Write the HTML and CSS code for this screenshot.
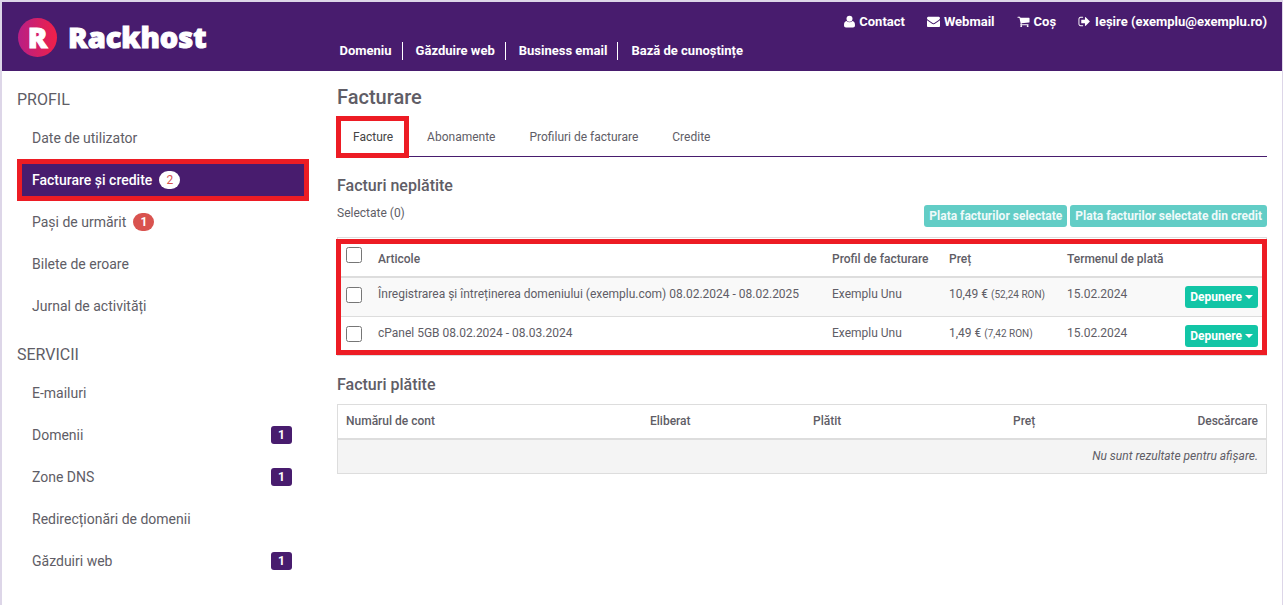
FILE: index.html
```html
<!DOCTYPE html>
<html lang="ro">
<head>
<meta charset="utf-8">
<meta name="viewport" content="width=device-width, initial-scale=1">
<title>Facturare - Rackhost</title>
<link rel="stylesheet" href="styles.css">
</head>
<body>
<header class="header">
  <a class="logo" href="#" aria-label="Rackhost">
    <span class="logo-mark">R</span>
    <span class="logo-name">Rackhost</span>
  </a>
  <div class="header-navs">
    <nav class="user-nav" aria-label="Cont">
      <a href="#"><svg class="icon icon-user" viewBox="0 0 11 13" aria-hidden="true"><circle cx="5.5" cy="3.7" r="3"/><path d="M2.6 6.1C.8 6.2 0 8 0 10.3 0 11.800 .8 12.500 2 12.500h7c1.200 0 2-.7 2-2.200 0-2.300-.8-4.100-2.600-4.200-.8.800-1.800 1.200-2.900 1.200s-2.100-.4-2.900-1.200z"/></svg>Contact</a>
      <a href="#"><svg class="icon" viewBox="0 0 1792 1792" aria-hidden="true"><path d="M1792 710v794q0 66-47 113t-113 47h-1472q-66 0-113-47t-47-113v-794q44 49 101 87 362 246 497 345 57 42 92.500 65.500t94.500 48 110 24.500h2q51 0 110-24.500t94.500-48 92.500-65.500q170-123 498-345 57-39 100-87zm0-294q0 79-49 151t-122 123q-376 261-468 325-10 7-42.500 31t-54 38.500-52 32.500-57.500 27-50 9h-2q-23 0-50-9t-57.500-27-52-32.500-54-38.500-42.500-31q-91-64-262-182.500t-205-142.500q-62-42-117-115.500t-55-136.500q0-78 41.500-130t118.500-52h1472q65 0 112.500 47t47.500 113z"/></svg>Webmail</a>
      <a href="#"><svg class="icon" viewBox="0 0 1792 1792" aria-hidden="true"><path d="M704 1536q0 52-38 90t-90 38-90-38-38-90 38-90 90-38 90 38 38 90zm896 0q0 52-38 90t-90 38-90-38-38-90 38-90 90-38 90 38 38 90zm128-1088v512q0 24-16.500 42.500t-40.500 21.500l-1044 122q13 60 13 70 0 16-24 64h920q26 0 45 19t19 45-19 45-45 19h-1024q-26 0-45-19t-19-45q0-11 8-31.500t16-36 21.500-40 15.500-29.500l-177-823h-204q-26 0-45-19t-19-45 19-45 45-19h256q16 0 28.500 6.500t19.500 15.500 13 24.500 8 26 5.500 29.500 4.500 26h1201q26 0 45 19t19 45z"/></svg>Coș</a>
      <a href="#"><svg class="icon" viewBox="0 0 1792 1792" aria-hidden="true"><path d="M704 1440q0 4 1 20t.5 26.500-3 23.500-10 19.500-20.500 6.500h-320q-119 0-203.500-84.500t-84.500-203.500v-704q0-119 84.500-203.500t203.500-84.500h320q13 0 22.500 9.500t9.500 22.500q0 4 1 20t.5 26.500-3 23.500-10 19.500-20.500 6.500h-320q-66 0-113 47t-47 113v704q0 66 47 113t113 47h312l11.500 1 11.500 3 8 5.500 7 9 2 13.500zm928-544q0 26-19 45l-544 544q-19 19-45 19t-45-19-19-45v-288h-448q-26 0-45-19t-19-45v-384q0-26 19-45t45-19h448v-288q0-26 19-45t45-19 45 19l544 544q19 19 19 45z"/></svg>Ieșire (exemplu@exemplu.ro)</a>
    </nav>
    <nav class="main-nav" aria-label="Principal">
      <a href="#">Domeniu</a>
      <a href="#">Găzduire web</a>
      <a href="#">Business email</a>
      <a href="#">Bază de cunoștințe</a>
    </nav>
  </div>
</header>

<div class="page">
  <aside class="sidebar">
    <h2 class="side-title">PROFIL</h2>
    <ul class="side-list">
      <li><a class="side-link" href="#">Date de utilizator</a></li>
      <li><a class="side-link active" href="#">Facturare și credite <span class="pill pill-light">2</span></a></li>
      <li><a class="side-link" href="#">Pași de urmărit <span class="pill">1</span></a></li>
      <li><a class="side-link" href="#">Bilete de eroare</a></li>
      <li><a class="side-link" href="#">Jurnal de activități</a></li>
    </ul>
    <h2 class="side-title">SERVICII</h2>
    <ul class="side-list">
      <li><a class="side-link" href="#">E-mailuri</a></li>
      <li><a class="side-link" href="#">Domenii <span class="count">1</span></a></li>
      <li><a class="side-link" href="#">Zone DNS <span class="count">1</span></a></li>
      <li><a class="side-link" href="#">Redirecționări de domenii</a></li>
      <li><a class="side-link" href="#">Găzduiri web <span class="count">1</span></a></li>
    </ul>
  </aside>

  <main class="content">
    <h1 class="title">Facturare</h1>
    <nav class="tabs" aria-label="Facturare">
      <a class="tab current" href="#" aria-current="page">Facture</a>
      <a class="tab" href="#">Abonamente</a>
      <a class="tab" href="#">Profiluri de facturare</a>
      <a class="tab" href="#">Credite</a>
    </nav>

    <h2 class="section-title">Facturi neplătite</h2>
    <div class="actions">
      <span>Selectate (0)</span>
      <div class="action-buttons">
        <button class="btn" type="button" disabled>Plata facturilor selectate</button>
        <button class="btn" type="button" disabled>Plata facturilor selectate din credit</button>
      </div>
    </div>
    <div class="marked">
      <table class="table striped">
        <colgroup><col class="c-check"><col><col class="c-profile"><col class="c-price"><col class="c-due"><col class="c-action"></colgroup>
        <thead>
          <tr>
            <th class="top"><input class="check" type="checkbox" aria-label="Selectează toate"></th>
            <th>Articole</th>
            <th>Profil de facturare</th>
            <th>Preț</th>
            <th colspan="2">Termenul de plată</th>
          </tr>
        </thead>
        <tbody>
          <tr>
            <td><input class="check" type="checkbox" aria-label="Selectează exemplu.com"></td>
            <td>Înregistrarea și întreținerea domeniului (exemplu.com) 08.02.2024 - 08.02.2025</td>
            <td>Exemplu Unu</td>
            <td>10,49 € <small>(52,24 RON)</small></td>
            <td>15.02.2024</td>
            <td class="c-pay"><button class="btn" type="button">Depunere<span class="caret"></span></button></td>
          </tr>
          <tr>
            <td><input class="check" type="checkbox" aria-label="Selectează cPanel 5GB"></td>
            <td>cPanel 5GB 08.02.2024 - 08.03.2024</td>
            <td>Exemplu Unu</td>
            <td>1,49 € <small>(7,42 RON)</small></td>
            <td>15.02.2024</td>
            <td class="c-pay"><button class="btn" type="button">Depunere<span class="caret"></span></button></td>
          </tr>
        </tbody>
      </table>
    </div>

    <h2 class="section-title">Facturi plătite</h2>
    <table class="table paid">
      <colgroup><col class="p-number"><col class="p-issued"><col class="p-paid"><col><col></colgroup>
      <thead>
        <tr><th>Numărul de cont</th><th>Eliberat</th><th>Plătit</th><th>Preț</th><th class="right">Descărcare</th></tr>
      </thead>
      <tbody>
        <tr><td class="empty" colspan="5">Nu sunt rezultate pentru afișare.</td></tr>
      </tbody>
    </table>
  </main>
</div>
</body>
</html>
```

FILE: styles.css
```css
:root {
  --purple: #481c6e;
  --text: #605d66;
  --red: #ed1c24;
  --teal: #12c5a6;
  --line: #ddd;
}

* { box-sizing: border-box; }

body {
  margin: 0;
  min-height: 100vh;
  border: 2px solid #ddd6e8;
  border-right-width: 1px;
  border-bottom: 0;
  background: #fff;
  color: var(--text);
  font: 12px/17px Roboto, "Liberation Sans", sans-serif;
}

a { color: inherit; text-decoration: none; }
h1, h2 { margin: 0; font-weight: 500; }

/* Header */
.header {
  display: flex;
  padding: 0 15px;
  min-height: 69px;
  background: var(--purple);
  color: #fff;
  font-size: 13px;
  font-weight: 700;
}

.logo {
  display: flex;
  align-items: center;
  gap: 11px;
  flex: 0 0 calc(25% + 10px);
  padding: 2px 0 0 1px;
  font-family: "Noto Sans", "Open Sans", sans-serif;
  font-size: 29px;
  font-weight: 900;
  line-height: 37px;
  -webkit-text-stroke: 1px #fff;
}

.logo-mark {
  display: grid;
  place-items: center;
  width: 39px;
  height: 39px;
  padding-bottom: 2px;
  border-radius: 50%;
  background: linear-gradient(90deg, #b81f86, #f02048);
}

.logo-name { padding-bottom: 2px; }

.header-navs {
  flex: 1;
  display: flex;
  flex-direction: column;
  justify-content: space-between;
  padding: 11px 0;
}

.user-nav {
  display: flex;
  justify-content: flex-end;
  gap: 22px;
}

.user-nav a { display: flex; align-items: center; gap: 4px; }
.icon { width: 13px; height: 13px; fill: currentColor; }
.icon-user { width: 11px; }

.main-nav { display: flex; }

.main-nav a {
  padding: 0 10px 0 13px;
  border-right: 1px solid #fff;
  line-height: 18px;
}

.main-nav a:first-child { padding-left: 0; }
.main-nav a:last-child { border-right: 0; }

/* Page columns */
.page { display: flex; }

.sidebar {
  flex: 0 0 25%;
  padding: 2px 15px 0;
}

.content {
  flex: 1;
  min-width: 0;
  padding: 15px 15px 0;
}

/* Sidebar */
.side-title {
  margin: 18px 0 8px;
  font-size: 16px;
  line-height: 18px;
  font-weight: 400;
}

.side-list { margin: 0; padding: 0; list-style: none; }
.side-list + .side-title { margin-top: 19px; }

.side-link {
  display: flex;
  align-items: center;
  gap: 7px;
  height: 42px;
  padding: 0 15px;
  font-size: 14px;
}

.side-link.active {
  margin-right: -2px;
  padding: 0 10px;
  border: 5px solid var(--red);
  background: var(--purple);
  color: #fff;
  font-weight: 500;
}

.pill, .count {
  width: 21px;
  height: 18px;
  background: #d9534f;
  border-radius: 9px;
  color: #fff;
  font-size: 12px;
  font-weight: 700;
  line-height: 18px;
  text-align: center;
}

.pill-light { background: #fff; color: #d9534f; font-weight: 400; }
.count { margin-left: auto; border-radius: 3px; background: var(--purple); }

/* Main column */
.title { font-size: 20px; line-height: 22px; }

.tabs {
  display: flex;
  gap: 2px;
  margin-top: 9px;
  border-bottom: 1px solid var(--purple);
}

.tab {
  position: relative;
  padding: 12px 16px 10px;
}

.tab.current { color: #444; }

.tab.current::after,
.marked::after {
  content: "";
  position: absolute;
  border: 5px solid var(--red);
  pointer-events: none;
}

.tab.current::after { inset: -1px 0 -2px -1px; }

.section-title {
  margin: 20px 0 10px;
  font-size: 16px;
  line-height: 18px;
}

.actions {
  display: flex;
  justify-content: space-between;
  align-items: flex-start;
  margin-bottom: 10px;
}

.action-buttons { display: flex; gap: 3px; }

.btn {
  display: inline-flex;
  align-items: center;
  height: 22px;
  padding: 0 5px;
  border: 0;
  border-radius: 3px;
  background: var(--teal);
  color: #fff;
  font: 700 12px/22px Roboto, "Liberation Sans", sans-serif;
  white-space: nowrap;
}

.btn:disabled { background: #62cdc6; color: #effafa; }

.caret {
  margin-left: 3px;
  border: 4px solid transparent;
  border-top-color: currentColor;
  border-bottom: 0;
}

/* Tables */
.marked { position: relative; }
.marked::after { inset: 2px 0 1px -1px; }

.table {
  width: 100%;
  border: 1px solid var(--line);
  border-spacing: 0;
  table-layout: fixed;
}

.table th, .table td { padding: 8px; text-align: left; vertical-align: top; }
.table th { border-bottom: 2px solid var(--line); font-weight: 500; vertical-align: bottom; }
.table th.top { vertical-align: top; }
.table tr + tr td { border-top: 1px solid var(--line); }
.striped thead tr { height: 40px; }
.striped tbody tr:first-child { background: #f9f9f9; }
.table .right { text-align: right; }
.table small { font-size: 10px; }

.check { display: block; width: 16px; height: 16px; margin: 1px 0 0; }

.c-check { width: 32px; }
.c-profile { width: 117px; }
.c-price { width: 118px; }
.c-due { width: 117px; }
.c-action { width: 90px; }
.table .c-pay { padding-left: 0; text-align: right; line-height: 22px; }
.c-pay .btn { vertical-align: top; }

.p-number { width: 304px; }
.p-issued { width: 163px; }
.p-paid { width: 200px; }

.table .empty { background: #f4f4f4; text-align: right; font-style: italic; }
```
